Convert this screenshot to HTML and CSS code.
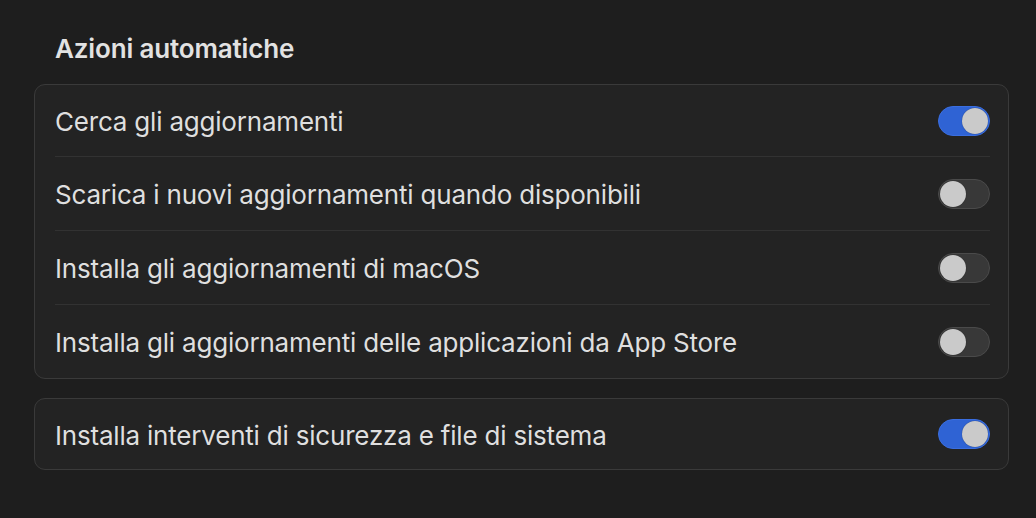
FILE: index.html
```html
<!DOCTYPE html>
<html lang="it">
<head>
<meta charset="utf-8">
<link rel="stylesheet" href="styles.css">
</head>
<body>
<main class="pane">
  <h2 class="section-title">Azioni automatiche</h2>
  <section class="card">
    <div class="row">
      <span class="label">Cerca gli aggiornamenti</span>
      <span class="toggle on"><span class="knob"></span></span>
    </div>
    <div class="row">
      <span class="label">Scarica i nuovi aggiornamenti quando disponibili</span>
      <span class="toggle"><span class="knob"></span></span>
    </div>
    <div class="row">
      <span class="label">Installa gli aggiornamenti di macOS</span>
      <span class="toggle"><span class="knob"></span></span>
    </div>
    <div class="row">
      <span class="label">Installa gli aggiornamenti delle applicazioni da App Store</span>
      <span class="toggle"><span class="knob"></span></span>
    </div>
  </section>
  <section class="card single">
    <div class="row">
      <span class="label">Installa interventi di sicurezza e file di sistema</span>
      <span class="toggle on"><span class="knob"></span></span>
    </div>
  </section>
</main>
</body>
</html>
```

FILE: styles.css
```css
html, body {
  margin: 0;
  padding: 0;
  background: #1e1e1e;
  height: 100%;
}
body {
  font-family: Inter, "Noto Sans", "Liberation Sans", sans-serif;
  color: #dfdfdf;
}
.pane {
  padding: 32px 27px 0 34px;
  display: flex;
  flex-direction: column;
  gap: 19px;
}
.section-title {
  margin: 0 0 -1px 21px;
  font-size: 26px;
  font-weight: 600;
  line-height: 34px;
  letter-spacing: -0.15px;
  color: #e2e2e2;
}
.card {
  background: #232323;
  border: 1px solid #3a3a3a;
  border-radius: 11px;
  padding: 0 18px 0 20px;
  display: flex;
  flex-direction: column;
}
.row {
  height: 73px;
  display: flex;
  align-items: center;
  justify-content: space-between;
  border-bottom: 1px solid #323232;
}
.row:first-child {
  height: 71px;
}
.row:last-child {
  border-bottom: none;
  height: 73px;
}
.card.single .row {
  height: 70px;
}
.label {
  font-size: 26px;
  letter-spacing: -0.2px;
  padding-top: 2px;
}
.toggle {
  width: 52px;
  height: 30px;
  box-sizing: border-box;
  border-radius: 15px;
  background: #383838;
  border: 1px solid #4a4a4a;
  display: flex;
  align-items: center;
  padding: 0 1px;
}
.toggle.on {
  background: #2f63d4;
  border-color: #3a6ee0;
  justify-content: flex-end;
}
.knob {
  width: 26px;
  height: 26px;
  border-radius: 50%;
  background: #cacaca;
  box-shadow: 0 0 1px rgba(0,0,0,0.5);
}
```
